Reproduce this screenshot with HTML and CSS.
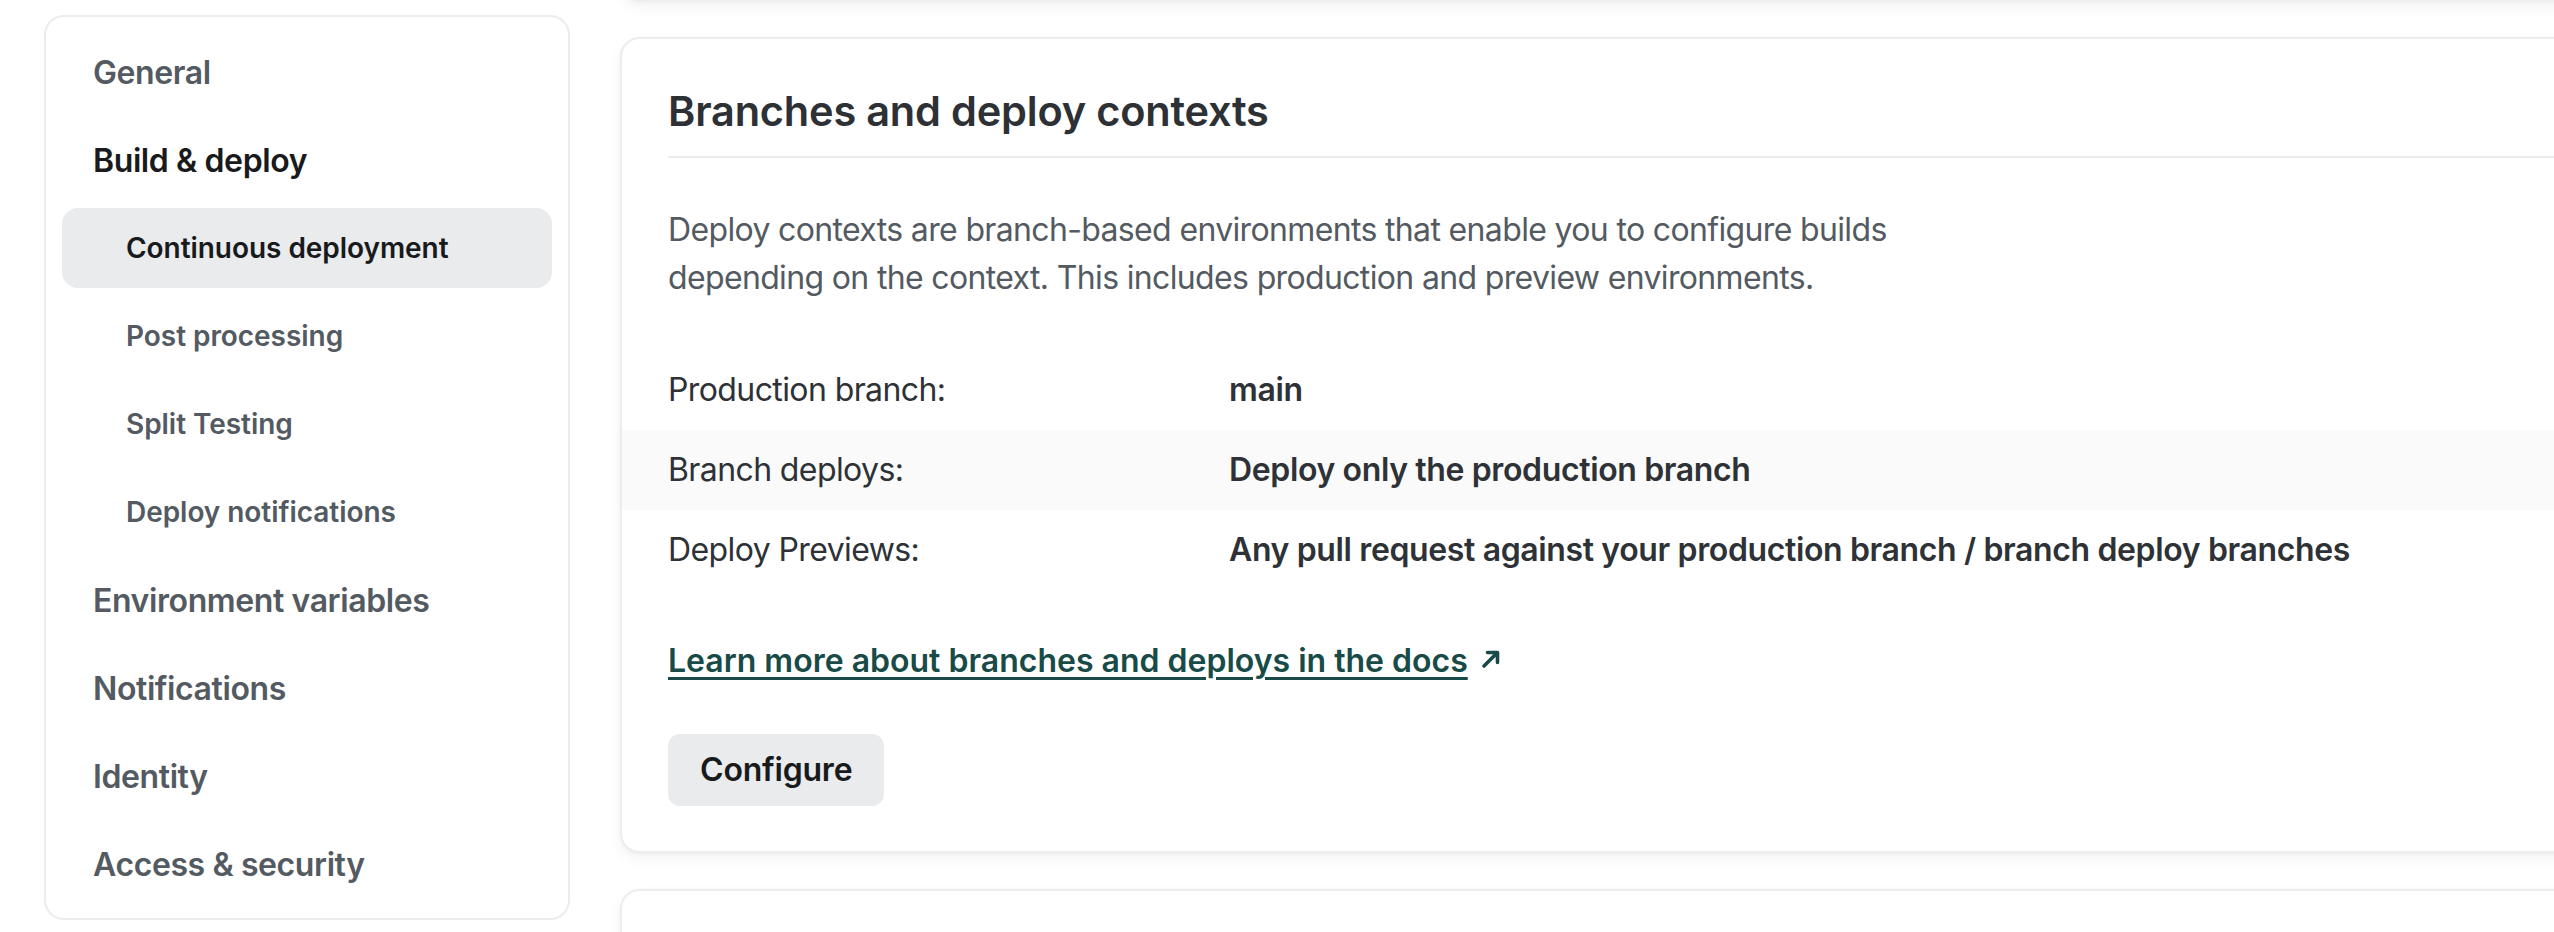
FILE: index.html
```html
<!DOCTYPE html>
<html lang="en">
<head>
<meta charset="utf-8">
<title>Build &amp; deploy settings</title>
<link rel="stylesheet" href="styles.css">
</head>
<body>
<div class="layout">
  <nav class="sidebar">
    <a class="nav-item">General</a>
    <a class="nav-item nav-item--current">Build &amp; deploy</a>
    <a class="nav-sub nav-sub--active">Continuous deployment</a>
    <a class="nav-sub">Post processing</a>
    <a class="nav-sub">Split Testing</a>
    <a class="nav-sub">Deploy notifications</a>
    <a class="nav-item">Environment variables</a>
    <a class="nav-item">Notifications</a>
    <a class="nav-item">Identity</a>
    <a class="nav-item">Access &amp; security</a>
  </nav>
  <main class="content">
    <section class="card card--previous"></section>
    <section class="card">
      <h2 class="card-title">Branches and deploy contexts</h2>
      <p class="card-text">Deploy contexts are branch-based environments that enable you to configure builds depending on the context. This includes production and preview environments.</p>
      <dl class="settings">
        <div class="settings-row">
          <dt>Production branch:</dt>
          <dd>main</dd>
        </div>
        <div class="settings-row settings-row--alt">
          <dt>Branch deploys:</dt>
          <dd>Deploy only the production branch</dd>
        </div>
        <div class="settings-row">
          <dt>Deploy Previews:</dt>
          <dd>Any pull request against your production branch / branch deploy branches</dd>
        </div>
      </dl>
      <p class="doc-link-wrap">
        <a class="doc-link"><span class="doc-link-text">Learn more about branches and deploys in the docs</span><svg class="doc-link-icon" viewBox="0 0 22 22" width="22" height="22" aria-hidden="true"><path d="M4 18 L17 5 M7.5 4.5 H17.5 V14.5" fill="none" stroke="currentColor" stroke-width="3.6" stroke-linecap="round" stroke-linejoin="round"/></svg></a>
      </p>
      <button class="btn" type="button">Configure</button>
    </section>
    <section class="card card--next"></section>
  </main>
</div>
</body>
</html>
```

FILE: styles.css
```css
html, body {
  margin: 0;
  padding: 0;
  background: #ffffff;
  overflow: hidden;
}

body {
  font-family: Inter, "Noto Sans", "Liberation Sans", sans-serif;
  color: #2e3236;
  width: 2554px;
  height: 932px;
}

.layout {
  display: flex;
  align-items: flex-start;
  padding-left: 44px;
  gap: 50px;
  height: 932px;
  overflow: hidden;
}

/* Sidebar */
.sidebar {
  flex: 0 0 526px;
  box-sizing: border-box;
  margin-top: 15px;
  border: 2px solid #ebecee;
  border-radius: 20px;
  padding: 15px 16px 14px;
  display: flex;
  flex-direction: column;
  gap: 8px;
}

.nav-item,
.nav-sub {
  display: flex;
  align-items: center;
  height: 80px;
  border-radius: 16px;
  font-weight: 600;
  color: #545a61;
  text-decoration: none;
  white-space: nowrap;
}

.nav-item {
  font-size: 32px;
  letter-spacing: -0.4px;
  padding-left: 31px;
}

.nav-sub {
  font-size: 28px;
  letter-spacing: -0.05px;
  padding-left: 64px;
}

.nav-item--current {
  color: #181a1c;
}

.nav-sub--active {
  background: #e9ebed;
  color: #181a1c;
}

/* Content column */
.content {
  flex: 0 0 2200px;
  display: flex;
  flex-direction: column;
  gap: 36px;
}

.card {
  box-sizing: border-box;
  background: #ffffff;
  border: 2px solid #ededed;
  border-radius: 20px;
  box-shadow: 0 6px 14px rgba(0, 0, 0, 0.05), 0 1px 3px rgba(0, 0, 0, 0.04);
  padding: 46px 46px 45px;
}

.card--previous {
  height: 120px;
  margin-top: -119px;
}

.card--next {
  height: 43px;
}

.card-title {
  margin: 0;
  font-size: 41.5px;
  line-height: 52px;
  font-weight: 600;
  color: #2d3135;
  letter-spacing: -0.2px;
  padding-bottom: 19px;
  border-bottom: 2px solid #ebebeb;
}

.card-text {
  margin: 48px 0 0;
  max-width: 1260px;
  font-size: 32px;
  line-height: 48px;
  letter-spacing: -0.65px;
  color: #545a61;
}

.settings {
  margin: 48px -46px 0;
}

.settings-row {
  display: grid;
  grid-template-columns: 561px 1fr;
  align-items: center;
  height: 80px;
  padding: 0 46px;
  font-size: 32px;
  line-height: 48px;
}

.settings-row--alt {
  background: #fafafa;
}

.settings-row dt {
  color: #2e3236;
  letter-spacing: -0.6px;
}

.settings-row dd {
  margin: 0;
  font-weight: 600;
  letter-spacing: -0.37px;
  color: #2e3236;
}

.doc-link-wrap {
  margin: 47px 0 0;
  font-size: 32px;
  line-height: 48px;
}

.doc-link {
  display: inline-flex;
  align-items: center;
  gap: 12px;
  color: #184b47;
  font-weight: 600;
  cursor: pointer;
}

.doc-link-text {
  text-decoration: underline;
  text-decoration-thickness: 3px;
  text-underline-offset: 5px;
}

.doc-link-icon {
  display: block;
  margin-top: -4px;
}

.btn {
  display: block;
  margin-top: 49px;
  height: 72px;
  padding: 0 32px;
  border: 0;
  border-radius: 12px;
  background: #e9ebed;
  color: #181a1c;
  font-family: inherit;
  font-size: 32px;
  font-weight: 600;
  letter-spacing: -0.2px;
  line-height: 48px;
}
```
